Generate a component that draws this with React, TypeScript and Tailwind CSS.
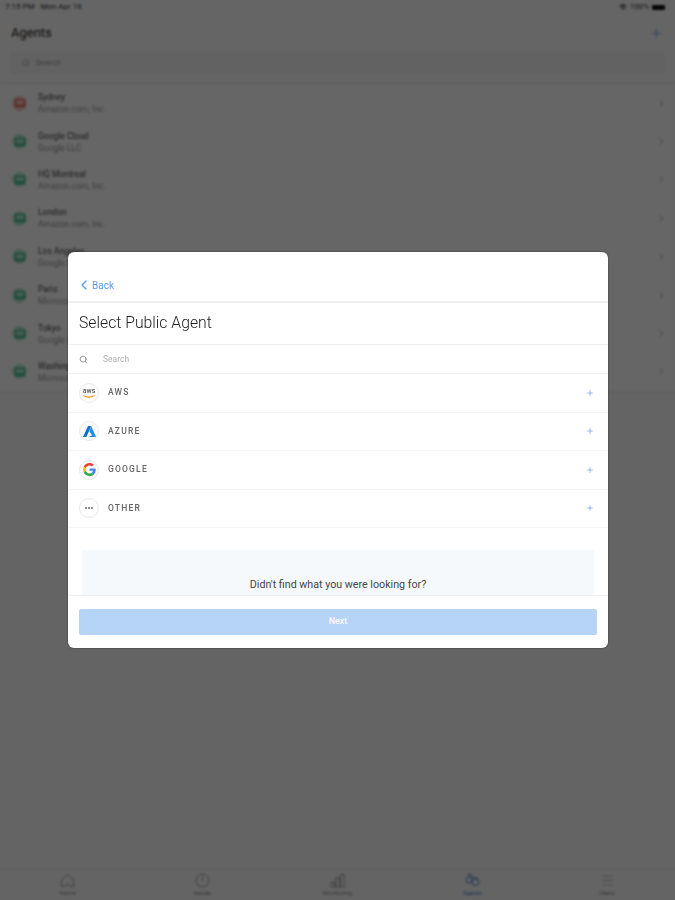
import React from "react";
import { ChevronLeft, ChevronRight, Menu, Plus, Search, Wifi } from "lucide-react";

const agents = [
  { name: "Sydney", org: "Amazon.com, Inc.", down: true },
  { name: "Google Cloud", org: "Google LLC", down: false },
  { name: "HQ Montreal", org: "Amazon.com, Inc.", down: false },
  { name: "London", org: "Amazon.com, Inc.", down: false },
  { name: "Los Angeles", org: "Google LLC", down: false },
  { name: "Paris", org: "Microsoft Corporation", down: false },
  { name: "Tokyo", org: "Google LLC", down: false },
  { name: "Washington", org: "Microsoft Corporation", down: false },
];

const AgentIcon = ({ down }: { down: boolean }) => (
  <div
    className={`flex h-[15px] w-[15px] items-center justify-center rounded-full ${
      down ? "bg-[#f9c4c0]" : "bg-[#b2e8d0]"
    }`}
  >
    <svg width="10" height="8" viewBox="0 0 10 8" fill="none">
      <rect
        x="0.500"
        y="0.500"
        width="9"
        height="7"
        stroke={down ? "#e0554d" : "#24a877"}
        strokeWidth="1"
      />
      <path d="M0.500 6h9" stroke={down ? "#e0554d" : "#24a877"} strokeWidth="1" />
    </svg>
  </div>
);

const AwsLogo = () => (
  <div className="flex flex-col items-center">
    <span className="text-[7px] leading-[7px] font-medium text-[#555]">aws</span>
    <svg width="12" height="3" viewBox="0 0 12 3" fill="none">
      <path d="M0.500 0.500C4 2.600 8 2.600 11.500 0.500" stroke="#f29111" strokeWidth="1.200" />
    </svg>
  </div>
);

const AzureLogo = () => (
  <svg width="13" height="11" viewBox="0 0 13 11">
    <path d="M5 0h3.200L3.400 11H0z" fill="#0a6fd0" />
    <path d="M8.200 0L13 11H5.600L9 9.200 6.400 5.400z" fill="#1f8fe8" />
  </svg>
);

const GoogleLogo = () => (
  <svg width="13" height="13" viewBox="0 0 48 48">
    <path fill="#EA4335" d="M24 9.500c3.500 0 6.600 1.200 9.100 3.600l6.800-6.800C35.800 2.400 30.400 0 24 0 14.600 0 6.600 5.400 2.600 13.200l7.900 6.200C12.400 13.600 17.700 9.500 24 9.500z" />
    <path fill="#4285F4" d="M46.900 24.500c0-1.600-.1-3.100-.4-4.500H24v9h12.900c-.6 3-2.200 5.500-4.700 7.200l7.700 6c4.500-4.200 7-10.300 7-17.700z" />
    <path fill="#FBBC05" d="M10.500 28.600c-.5-1.400-.8-3-.8-4.600s.3-3.200.8-4.600l-7.900-6.200C.9 16.500 0 20.100 0 24s.9 7.500 2.600 10.800l7.900-6.200z" />
    <path fill="#34A853" d="M24 48c6.500 0 11.900-2.100 15.900-5.800l-7.700-6c-2.200 1.400-4.900 2.300-8.200 2.300-6.300 0-11.600-4.200-13.500-9.900l-7.900 6.200C6.600 42.600 14.600 48 24 48z" />
  </svg>
);

const OtherLogo = () => (
  <div className="flex gap-[1px]">
    <span className="h-[2px] w-[2px] rounded-full bg-[#666]" />
    <span className="h-[2px] w-[2px] rounded-full bg-[#666]" />
    <span className="h-[2px] w-[2px] rounded-full bg-[#666]" />
  </div>
);

const providers = [
  { name: "AWS", logo: <AwsLogo /> },
  { name: "AZURE", logo: <AzureLogo /> },
  { name: "GOOGLE", logo: <GoogleLogo /> },
  { name: "OTHER", logo: <OtherLogo /> },
];

const HomeIcon = () => (
  <svg width="15" height="15" viewBox="0 0 15 15" fill="none" stroke="#a0a0a0" strokeWidth="1">
    <path d="M1.500 6.800L7.500 1.500l6 5.300v6.700H9.800l-2.300-3-2.300 3H1.500z" />
  </svg>
);

const ClockIcon = () => (
  <svg width="15" height="15" viewBox="0 0 15 15" fill="none" stroke="#a0a0a0" strokeWidth="1">
    <circle cx="7.500" cy="7.500" r="6.500" />
    <path d="M7.500 3.500v4.500" />
  </svg>
);

const BarsIcon = () => (
  <svg width="15" height="15" viewBox="0 0 15 15" fill="none" stroke="#a0a0a0" strokeWidth="1">
    <rect x="1" y="9" width="3.500" height="5" />
    <rect x="5.800" y="5" width="3.500" height="9" />
    <rect x="10.600" y="1.500" width="3.500" height="12.500" />
  </svg>
);

const AgentsTabIcon = () => (
  <svg width="15" height="15" viewBox="0 0 15 15" fill="none" stroke="#4a7fd0" strokeWidth="1">
    <circle cx="4" cy="7" r="3" />
    <circle cx="10.500" cy="9" r="3.500" />
    <circle cx="4.500" cy="1.800" r="1" />
    <path d="M5.500 2.500L13 6" />
  </svg>
);

const tabs = [
  { label: "Home", icon: <HomeIcon /> },
  { label: "Issues", icon: <ClockIcon /> },
  { label: "Monitoring", icon: <BarsIcon /> },
  { label: "Agents", icon: <AgentsTabIcon />, active: true },
  { label: "Menu", icon: <Menu size={15} strokeWidth={1} className="text-[#a0a0a0]" /> },
];

export default function App() {
  return (
    <div className="relative h-[900px] w-[675px] overflow-hidden bg-[#f9f9f9] font-['Roboto',sans-serif]">
      {/* Page behind the dialog */}
      <div className="flex h-full flex-col blur-[0.8px]">
        <div className="flex h-[84px] flex-col border-b border-[#e6e6e6] bg-[#fdfdfd]">
          <div className="flex h-[14px] items-center justify-between pl-[5px] pr-[10px] text-[8px] text-[#333]">
            <span>7:15 PM &nbsp; Mon Apr 16</span>
            <div className="flex items-center gap-[3px]">
              <Wifi size={8} strokeWidth={3} />
              <span>100%</span>
              <span className="h-[5px] w-[13px] rounded-[1px] bg-[#111]" />
            </div>
          </div>
          <div className="flex h-[38px] items-center justify-between px-[11px]">
            <span className="text-[13px] text-[#222]">Agents</span>
            <Plus size={15} strokeWidth={1} className="text-[#2f74d8]" />
          </div>
          <div className="mx-[10px] flex h-[22px] items-center gap-[6px] rounded-[3px] bg-[#f4f4f4] pl-[12px] text-[8px] text-[#999]">
            <Search size={8} />
            <span>Search</span>
          </div>
        </div>

        <div className="flex flex-col border-b border-[#ececec] bg-white">
          {agents.map((a) => (
            <div key={a.name} className="flex h-[38.400px] items-center pl-[12px] pr-[8px]">
              <AgentIcon down={a.down} />
              <div className="ml-[11px] flex-1 leading-[12px]">
                <div className="text-[8.500px] text-[#444]">{a.name}</div>
                <div className="text-[8.500px] text-[#999]">{a.org}</div>
              </div>
              <ChevronRight size={11} strokeWidth={1.500} className="text-[#8f8f8f]" />
            </div>
          ))}
        </div>

        <div className="flex-1" />

        <div className="grid h-[31px] grid-cols-5 border-t border-[#ececec] bg-[#fafafa]">
          {tabs.map((t) => (
            <div key={t.label} className="flex flex-col items-center pt-[3px]">
              {t.icon}
              <span className={`mt-px text-[6px] leading-[7px] ${t.active ? "text-[#4a7fd0]" : "text-[#888]"}`}>
                {t.label}
              </span>
            </div>
          ))}
        </div>
      </div>

      {/* Dim layer */}
      <div className="absolute inset-0 bg-black/60" />

      {/* Dialog */}
      <div className="absolute left-[68px] top-[252px] flex h-[396px] w-[540px] flex-col overflow-hidden rounded-[6px] bg-white shadow-[0_0_2px_rgba(0,0,0,0.5)] blur-[0.5px]">
        <div className="flex h-[51px] items-end border-b-2 border-[#f0f0f0] pb-[8px] pl-[8px] text-[#5b9bec]">
          <ChevronLeft size={16} strokeWidth={2} />
          <span className="text-[10px] leading-[15px]">Back</span>
        </div>
        <div className="flex h-[42px] items-center border-b border-[#f0f0f0] pb-[2px] pl-[11px] text-[15.750px] font-light text-[#222]">
          Select Public Agent
        </div>
        <div className="flex h-[29px] items-center border-b border-[#f0f0f0] pl-[11px] text-[#777]">
          <Search size={9} strokeWidth={2} />
          <span className="ml-[15px] text-[8.500px] text-[#b0b0b0]">Search</span>
        </div>

        <div className="flex flex-col">
          {providers.map((p) => (
            <div key={p.name} className="flex h-[38.500px] items-center border-b border-[#f4f4f4] pl-[11px] pr-[14px]">
              <div className="flex h-[20px] w-[20px] items-center justify-center rounded-full border border-[#e8e8e8]">
                {p.logo}
              </div>
              <span className="ml-[9px] flex-1 text-[8.500px] font-medium tracking-[1.200px] text-[#666]">{p.name}</span>
              <Plus size={8} strokeWidth={2} className="text-[#5b9bec]" />
            </div>
          ))}
        </div>

        <div className="min-h-0 flex-1 overflow-hidden px-[14px] pt-[22px]">
          <div className="flex h-[60px] flex-col items-center bg-[#f6f9fb] pt-[28px] text-[10.700px] leading-[14px] text-[#444]">
            Didn't find what you were looking for?
          </div>
        </div>

        <div className="h-[53px] border-t border-[#f0f0f0] px-[11px] pt-[13px]">
          <div className="flex h-[26px] items-center justify-center rounded-[2px] bg-[#b5d4f6] text-[9px] font-medium text-white">
            Next
          </div>
        </div>
      </div>
    </div>
  );
}
